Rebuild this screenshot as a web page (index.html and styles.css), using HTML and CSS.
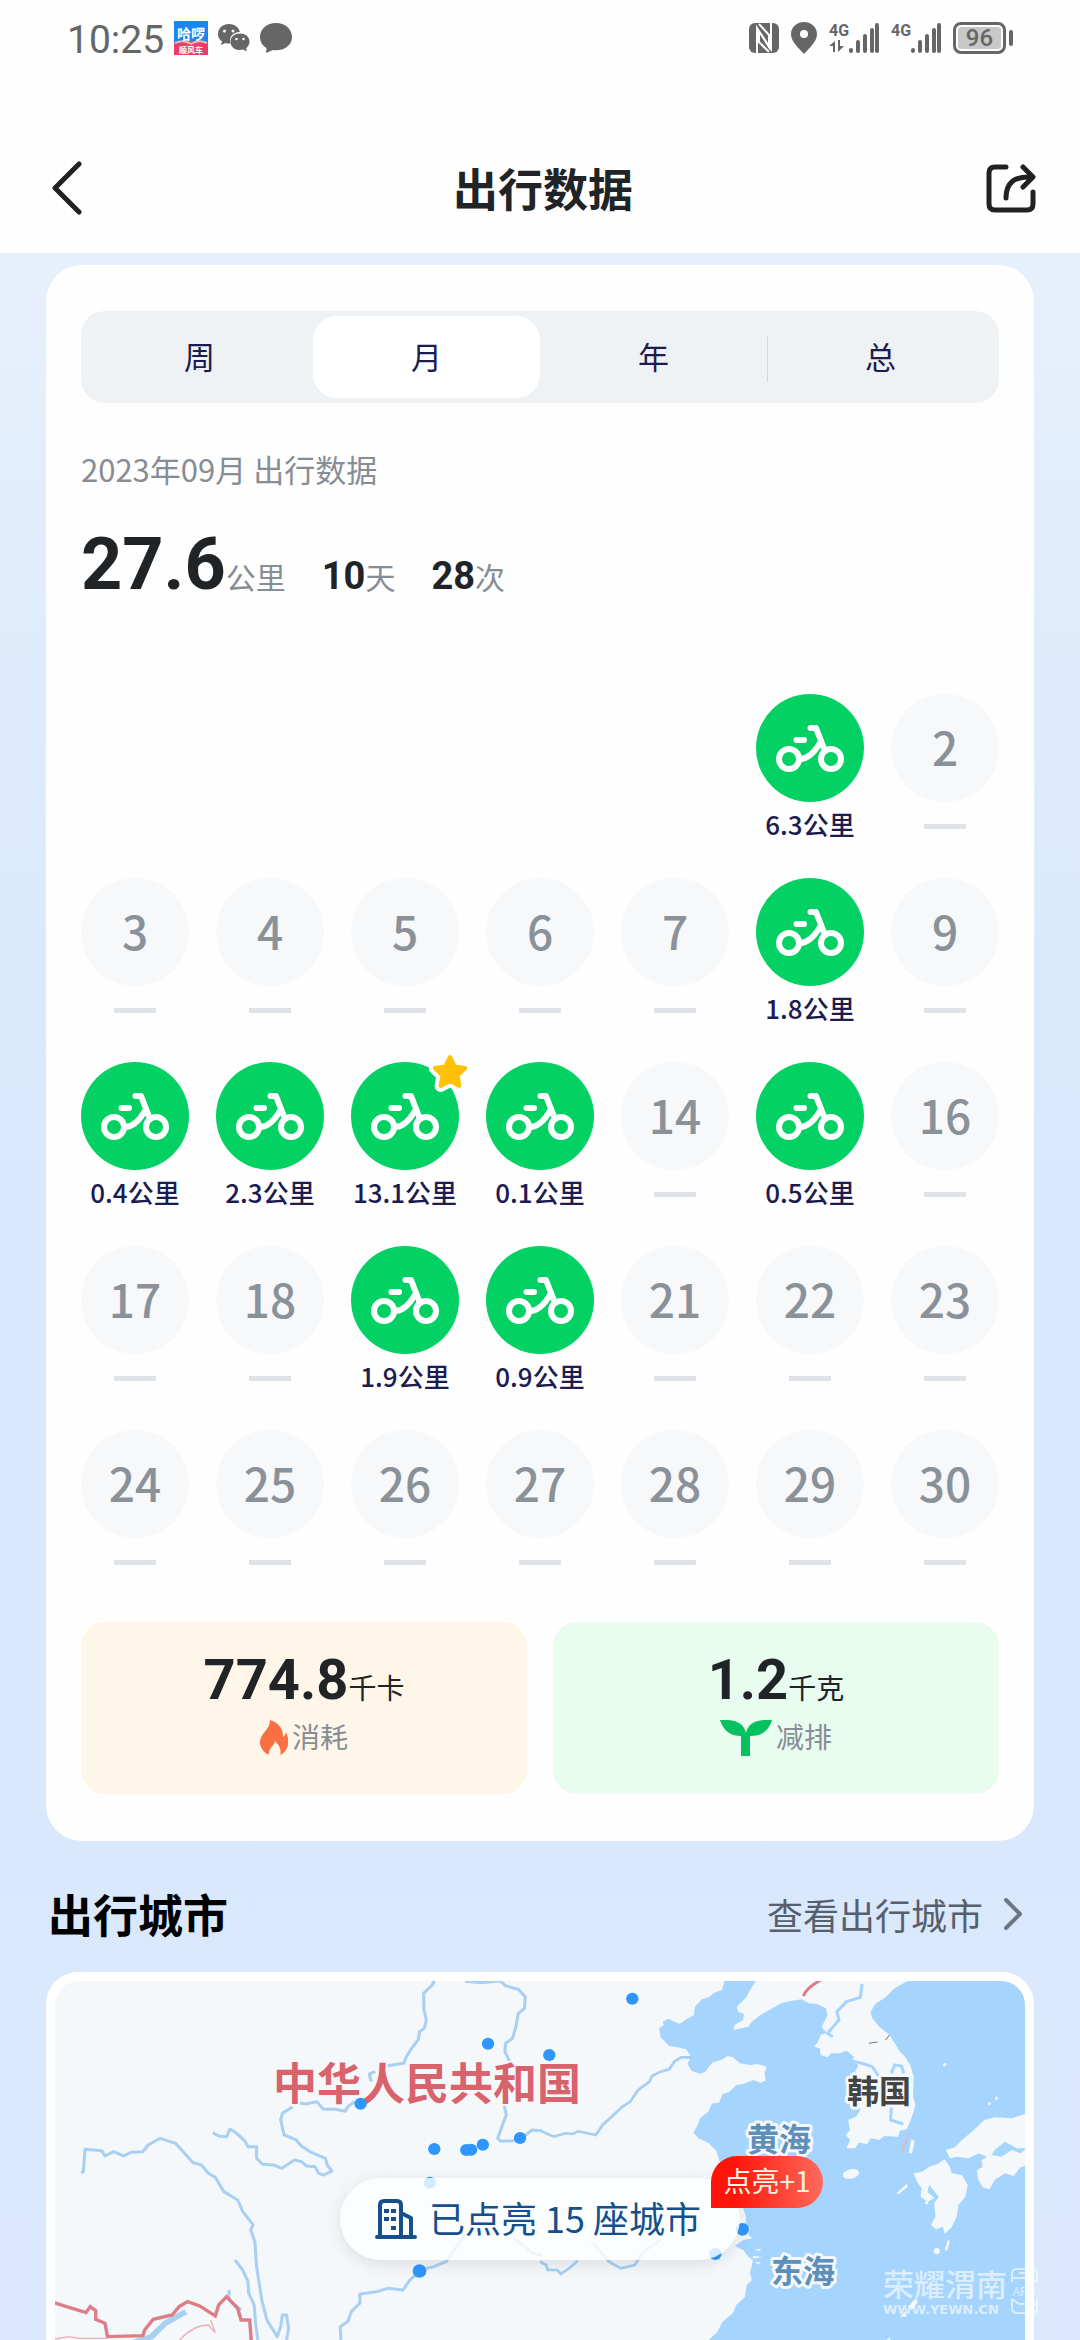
FILE: index.html
```html
<!DOCTYPE html>
<html lang="zh-CN">
<head>
    <meta charset="UTF-8">
    <meta name="viewport" content="width=device-width, initial-scale=1.0">
    <title>出行数据</title>
    <link rel="stylesheet" href="styles.css">
</head>
<body>
    <!-- shared icons -->
    <svg class="sprite" aria-hidden="true">
        <symbol id="bike" viewBox="0 0 108 108">
            <g fill="none" stroke="#fff" stroke-width="6" stroke-linecap="round" stroke-linejoin="round">
                <circle cx="33" cy="65" r="10"/>
                <circle cx="75" cy="65" r="10"/>
                <path d="M40.500 46h7.500"/>
                <path d="M54.500 34H60L69 57"/>
                <path d="M45 65Q55 64 64 49"/>
            </g>
        </symbol>
        <symbol id="signal" viewBox="0 0 30 32">
            <g stroke="#666" stroke-width="4" stroke-linecap="round">
                <path d="M2 29v-1M9 29v-9M16 29V14M23 29V8M28 29V3"/>
            </g>
        </symbol>
    </svg>

    <header class="header">
        <div class="status-bar">
            <div class="status-left">
                <span class="time">10:25</span>
                <svg width="34" height="34" viewBox="0 0 34 34">
                    <rect width="34" height="34" fill="#1d84f0"/>
                    <path d="M0 22L17 20L34 22V34H0z" fill="#ee3a6c"/>
                    <path d="M1 22Q10 18 17 23Q24 18 33 22" fill="none" stroke="#ffb3b0" stroke-width="2"/>
                    <text x="17" y="18" text-anchor="middle" font-size="14" font-weight="700" fill="#fff">哈啰</text>
                    <text x="17" y="32" text-anchor="middle" font-size="8" font-weight="700" fill="#fff">顺风车</text>
                </svg>
                <svg width="32" height="28" viewBox="0 0 32 28">
                    <path d="M11 0C5 0 0 4 0 10c0 3 1.500 5.500 4 7.500L3 21l4.500-2c1.500.5 4 .8 5 .5C10.500 13 15 8 21.800 8 21 3 16 0 11 0z" fill="#666"/>
                    <path d="M22 9.500c-5.500 0-9.500 3.500-9.500 8.200S16.500 26 22 26c1 0 2-.2 3-.5l4 2-1-3.200c2-1.600 3.500-3.700 3.500-6.600 0-4.700-4-8.200-9.500-8.200z" fill="#666"/>
                    <g fill="#fff"><circle cx="6.500" cy="7" r="1.500"/><circle cx="15" cy="7" r="1.500"/><circle cx="18.500" cy="15" r="1.300"/><circle cx="25.500" cy="15" r="1.300"/></g>
                </svg>
                <svg width="32" height="30" viewBox="0 0 32 30">
                    <path d="M16 0C7 0 0 6 0 14c0 5 2.500 8.500 6.500 11L6 30l7-3c10 1.500 19-4 19-13C32 6 25 0 16 0z" fill="#666"/>
                </svg>
            </div>
            <div class="status-right">
                <svg width="30" height="30" viewBox="0 0 30 30">
                    <rect width="30" height="30" rx="6" fill="#666"/>
                    <path d="M8 30V5l12 19V12L10 1M22 0v26L10 8v11l10 10" fill="none" stroke="#fff" stroke-width="2"/>
                </svg>
                <svg width="26" height="32" viewBox="0 0 26 32">
                    <path d="M13 0C5 0 0 6 0 12c0 8 8 14 13 20 5-6 13-12 13-20C26 6 21 0 13 0zm0 8a4 4 0 1 1 0 8 4 4 0 0 1 0-8z" fill="#666"/>
                </svg>
                <div class="network">
                    <span class="network-type">4G
                        <svg width="16" height="12" viewBox="0 0 16 12"><path d="M6 12V1L0 6h4v6zM9 0v12l6-6h-4V0z" fill="#666"/></svg>
                    </span>
                    <svg width="30" height="32"><use href="#signal"/></svg>
                </div>
                <div class="network">
                    <span class="network-type">4G</span>
                    <svg width="30" height="32"><use href="#signal"/></svg>
                </div>
                <div class="battery"><span>96</span></div>
            </div>
        </div>
        <nav class="nav">
            <button class="icon-btn" aria-label="返回">
                <svg width="32" height="54" viewBox="0 0 32 54">
                    <path d="M29 3L5 27L29 51" fill="none" stroke="#222" stroke-width="5" stroke-linecap="round" stroke-linejoin="round"/>
                </svg>
            </button>
            <h1>出行数据</h1>
            <button class="icon-btn" aria-label="分享">
                <svg width="50" height="50" viewBox="0 0 50 50">
                    <g fill="none" stroke="#222" stroke-width="5" stroke-linecap="round" stroke-linejoin="round">
                        <path d="M20 4H9Q3 4 3 10V41Q3 47 9 47H41Q47 47 47 41V29"/>
                        <path d="M20 35C20 20 28 13 46 14M37 4L47 14L37 24"/>
                    </g>
                </svg>
            </button>
        </nav>
    </header>

    <main class="content">
        <section class="card">
            <div class="tabs">
                <button class="tab">周</button>
                <button class="tab active">月</button>
                <button class="tab">年</button>
                <button class="tab divided">总</button>
            </div>

            <p class="subtitle">2023年09月 出行数据</p>
            <div class="summary">
                <span class="total"><strong>27.6</strong>公里</span>
                <span><b>10</b>天</span>
                <span><b>28</b>次</span>
            </div>

            <div class="calendar">
                <div class="day first ride"><svg class="dot"><use href="#bike"/></svg><span>6.3公里</span></div>
                <div class="day"><div class="dot">2</div><i></i></div>
                <div class="day"><div class="dot">3</div><i></i></div>
                <div class="day"><div class="dot">4</div><i></i></div>
                <div class="day"><div class="dot">5</div><i></i></div>
                <div class="day"><div class="dot">6</div><i></i></div>
                <div class="day"><div class="dot">7</div><i></i></div>
                <div class="day ride"><svg class="dot"><use href="#bike"/></svg><span>1.8公里</span></div>
                <div class="day"><div class="dot">9</div><i></i></div>
                <div class="day ride"><svg class="dot"><use href="#bike"/></svg><span>0.4公里</span></div>
                <div class="day ride"><svg class="dot"><use href="#bike"/></svg><span>2.3公里</span></div>
                <div class="day ride">
                    <svg class="dot"><use href="#bike"/></svg><span>13.1公里</span>
                    <svg class="star" viewBox="0 0 48 48">
                        <path d="M24 8L28.700 17.500L39.200 19.100L31.600 26.500L33.400 36.900L24 32L14.600 36.900L16.400 26.500L8.800 19.100L19.300 17.500z" fill="#fff" stroke="#fff" stroke-width="12" stroke-linejoin="round"/>
                        <path d="M24 8L28.700 17.500L39.200 19.100L31.600 26.500L33.400 36.900L24 32L14.600 36.900L16.400 26.500L8.800 19.100L19.300 17.500z" fill="#ffc107" stroke="#ffc107" stroke-width="4" stroke-linejoin="round"/>
                    </svg>
                </div>
                <div class="day ride"><svg class="dot"><use href="#bike"/></svg><span>0.1公里</span></div>
                <div class="day"><div class="dot">14</div><i></i></div>
                <div class="day ride"><svg class="dot"><use href="#bike"/></svg><span>0.5公里</span></div>
                <div class="day"><div class="dot">16</div><i></i></div>
                <div class="day"><div class="dot">17</div><i></i></div>
                <div class="day"><div class="dot">18</div><i></i></div>
                <div class="day ride"><svg class="dot"><use href="#bike"/></svg><span>1.9公里</span></div>
                <div class="day ride"><svg class="dot"><use href="#bike"/></svg><span>0.9公里</span></div>
                <div class="day"><div class="dot">21</div><i></i></div>
                <div class="day"><div class="dot">22</div><i></i></div>
                <div class="day"><div class="dot">23</div><i></i></div>
                <div class="day"><div class="dot">24</div><i></i></div>
                <div class="day"><div class="dot">25</div><i></i></div>
                <div class="day"><div class="dot">26</div><i></i></div>
                <div class="day"><div class="dot">27</div><i></i></div>
                <div class="day"><div class="dot">28</div><i></i></div>
                <div class="day"><div class="dot">29</div><i></i></div>
                <div class="day"><div class="dot">30</div><i></i></div>
            </div>

            <div class="stats">
                <div class="stat stat-energy">
                    <div class="stat-value"><strong>774.8</strong>千卡</div>
                    <div class="stat-label">
                        <svg width="28" height="36" viewBox="0 0 28 36">
                            <path d="M10 0C21 4 23 10 23 17Q26 15 26 12Q30 21 27 28Q25 33 20 35C22 30 19 25 15 21C15 25 8 28 9 35Q2 32 0 24C-1 13 10 11 10 0z" fill="#fa7044"/>
                        </svg>
                        <span>消耗</span>
                    </div>
                </div>
                <div class="stat stat-carbon">
                    <div class="stat-value"><strong>1.2</strong>千克</div>
                    <div class="stat-label">
                        <svg width="52" height="36" viewBox="0 0 52 36">
                            <path d="M0 0C17-1 24 4 26 13C28 4 35-1 52 0C48 12 41 16 30 16V36H21V16C11 16 4 12 0 0z" fill="#07c160"/>
                        </svg>
                        <span>减排</span>
                    </div>
                </div>
            </div>
        </section>

        <div class="section-head">
            <h2>出行城市</h2>
            <a href="#cities">查看出行城市
                <svg width="20" height="34" viewBox="0 0 20 34">
                    <path d="M3 3L17 17L3 31" fill="none" stroke="#6b7680" stroke-width="4" stroke-linecap="round" stroke-linejoin="round"/>
                </svg>
            </a>
        </div>

        <section class="map-card" id="cities">
            <svg class="map" viewBox="0 0 970 359" preserveAspectRatio="xMidYMin slice">
                <rect width="970" height="800" fill="#f5f8fa"/>
                <!-- east: sea, coast and islands -->
                <g transform="translate(485 -41) scale(.3444 .3333)">
                    <path d="M540 110L528 150L505 158L490 172L470 178L450 200L447 225L425 238L405 252L390 245L372 236L356 245L360 255L346 265L350 292L375 318L400 322L425 328L438 350L428 372L440 392L465 402L480 395L500 368L530 358L545 348L560 352L580 370L610 375L632 372L658 380L652 400L655 422L640 428L620 420L590 432L570 435L550 455L530 462L520 488L500 490L488 515L465 535L458 555L445 578L460 595L490 610L512 632L520 660L540 690L565 740L570 780L590 805L598 830L597 850L610 865L605 885L617 895L590 900L565 918L590 930L605 950L618 960L610 1000L615 1020L600 1035L595 1070L570 1095L560 1120L530 1145L515 1175L480 1210H1420V110z" fill="#a5d5fe"/>
                    <g fill="#f5f8fa">
                        <path d="M635 110L610 150L600 170L572 200L575 215L592 222L590 240L565 255L562 270L585 265L605 260L615 245L640 225L670 208L700 190L730 182L760 178L780 190L805 192L830 205L835 225L818 260L832 278L815 285L805 310L795 320L812 325L815 345L835 352L845 340L870 340L890 332L912 350L905 365L925 375L915 395L935 420L925 460L930 510L918 530L895 540L900 570L888 585L900 600L890 625L915 625L925 608L950 612L960 595L985 600L1000 588L1040 590L1045 572L1065 568L1080 530L1090 495L1083 470L1085 410L1075 375L1060 350L1045 335L1030 310L1015 285L985 260L965 235L960 215L975 190L1000 175L1030 145L1075 118V110z"/>
                        <ellipse cx="903" cy="702" rx="24" ry="14" transform="rotate(-12 903 702)"/>
                        <path d="M1085 700L1110 695L1130 680L1155 672L1175 658L1190 680L1195 700L1225 705L1242 735L1235 770L1215 795L1210 830L1195 862L1175 882L1170 860L1150 868L1135 855L1148 830L1145 790L1158 770L1130 735L1125 755L1145 775L1125 785L1105 770L1108 745L1095 725z"/>
                        <path d="M1178 630L1205 622L1225 600L1260 570L1290 540L1320 532L1370 535L1420 518V625L1385 625L1350 605L1320 630L1305 655L1275 640L1245 655L1210 650L1190 655z"/>
                        <path d="M1268 692L1285 680L1282 660L1310 645L1340 650L1370 630L1395 640L1420 620V675L1395 682L1375 708L1350 700L1320 720L1305 748L1285 742L1272 718z"/>
                        <path d="M1035 760L1065 732L1068 740L1042 762zM1070 640L1078 598L1088 604L1080 640zM1175 930L1185 898L1190 905L1182 932zM1320 480L1325 468L1332 478z"/>
                        <circle cx="1152" cy="933" r="9"/><circle cx="1175" cy="374" r="5"/><circle cx="1123" cy="788" r="5"/><circle cx="1305" cy="491" r="4"/>
                        <path d="M1070 1100L1090 1075L1098 1085L1080 1110zM1045 1130L1060 1115L1065 1130zM1005 1200L1018 1190L1015 1205zM620 930L640 926V933zM618 948L645 950L620 956zM625 968L640 965L635 974z"/>
                    </g>
                    <g fill="none" stroke="#a5d5fe" stroke-width="9">
                        <path d="M935 132L930 172L890 185L862 215L868 240L835 280L850 290M890 360L935 370L965 380L985 412M1020 400L1030 375L1050 378L1056 400M1020 500L1018 540L1055 552"/>
                    </g>
                    <path d="M0 572L40 590L75 580L95 582L110 574L162 585L182 555L240 500L262 485L285 450L318 425L325 408L350 395L375 388L390 365L410 352H440M0 965L18 975L22 990H50L60 1002L85 985L110 962M150 905L200 965L235 985L275 975L300 935L350 900" fill="none" stroke="#a5cff5" stroke-width="8"/>
                    <path d="M765 168Q772 145 815 120" fill="none" stroke="#dc7d87" stroke-width="9"/>
                    <path d="M955 310L980 306M1003 300L1015 285" stroke="#777" stroke-width="3"/>
                    <path d="M1050 640L1070 580" stroke="#c9bfdc" stroke-width="7"/>
                    <g fill="#2e96fc">
                        <circle cx="268" cy="176" r="18"/><circle cx="27" cy="345" r="18"/><circle cx="588" cy="868" r="19"/><circle cx="509" cy="942" r="18"/>
                    </g>
                </g>
                <!-- west: rivers and borders -->
                <g transform="translate(-55 -41) scale(.3444 .3333)">
                    <g fill="none" stroke="#a9d0f3" stroke-width="9" stroke-linejoin="round">
                        <path d="M1262 120L1255 135L1230 160L1231 210L1238 240L1232 265L1218 275L1215 298L1195 325L1180 350L1172 370L1120 378M1090 395L1072 402L1078 425M1030 485L1010 500L1002 514L975 508L938 507L920 485L888 492L865 488M850 500L820 520L815 540L825 585L860 600L875 618L905 638L945 655L950 675L964 693L940 705L925 700L915 680L890 678L875 665L855 660L818 685L795 675L762 673L745 655V620H720L710 602L685 578L668 567L658 590L635 588L618 578"/>
                        <path d="M235 698L242 696L247 628L295 632L305 648L330 635L358 648L380 637L415 635L430 615L465 595L510 610L560 668L585 675L605 700L625 712L650 755L690 780L705 815L735 855L728 870L740 905L745 980L760 1080L775 1140L805 1190L815 1160L820 1125H832L838 1165L830 1210"/>
                        <path d="M682 960L705 990L720 1025L722 1060L738 1095L742 1150L750 1210M665 1050V1080L700 1110"/>
                        <path d="M1350 124L1400 128L1450 122L1470 138L1505 148L1525 170L1523 205L1505 220L1498 260L1488 295L1468 310L1466 335L1480 365M1463 490L1470 525L1445 595L1455 604L1490 602L1520 590L1545 570L1575 572M990 1205L988 1160L1010 1145L1020 1115L1045 1090V1062L1095 1055L1125 1045L1170 1050L1190 1020L1220 995L1240 985L1260 980L1295 965L1350 885M1490 895L1525 920L1545 940L1575 945"/>
                        <path d="M385 1208L440 1190L480 1150L540 1115" stroke-width="17"/>
                    </g>
                    <path d="M155 1088L200 1102L250 1118L262 1100L278 1112V1138L305 1150L312 1190L415 1187L420 1170L445 1138L500 1125L520 1100L545 1085L580 1098L625 1128L635 1095L658 1070L690 1105L700 1140L725 1140L730 1210" fill="none" stroke="#dc7d87" stroke-width="10"/>
                    <path d="M155 1198L200 1190L230 1195H310M520 1202Q560 1155 605 1155L625 1178L612 1140" fill="none" stroke="#e8b0b6" stroke-width="4"/>
                </g>
                <text class="label-country" x="372" y="119" text-anchor="middle">中华人民共和国</text>
                <g transform="translate(-55 -41) scale(.3444 .3333)" fill="#2e96fc">
                    <circle cx="1417" cy="311" r="18"/><circle cx="1047" cy="491" r="18"/><circle cx="1510" cy="594" r="18"/><circle cx="1402" cy="614" r="18"/><circle cx="1261" cy="627" r="18"/><circle cx="1354" cy="630" r="18"/><circle cx="1368" cy="629" r="18"/><circle cx="1248" cy="728" r="18"/><circle cx="1218" cy="993" r="20"/>
                </g>
                <g class="label-place">
                    <text x="792" y="122" fill="#444">韩国</text>
                    <text x="692" y="170" fill="#5c8fba">黄海</text>
                    <text x="716" y="302" fill="#5c8fba">东海</text>
                </g>
            </svg>

            <div class="lit-pill">
                <svg width="42" height="40" viewBox="0 0 42 40">
                    <g fill="none" stroke="#15508c" stroke-width="4" stroke-linecap="round" stroke-linejoin="round">
                        <path d="M2 38H40M5 38V6Q5 2 9 2H22Q26 2 26 6V38M26 14L36 19V38"/>
                    </g>
                    <path d="M9 10h5v4h-5zM16 10h5v4h-5zM9 18h5v4h-5zM16 18h5v4h-5zM16 27h5v4h-5z" fill="#15508c"/>
                </svg>
                <span>已点亮 15 座城市</span>
                <em>点亮+1</em>
            </div>

            <div class="watermark">
                <div>
                    <p>荣耀渭南</p>
                    <small>WWW.YEWN.CN</small>
                </div>
                <svg width="27" height="46" viewBox="0 0 27 46">
                    <g fill="none" stroke="#fff" stroke-width="2">
                        <path d="M1 14V6Q1 1 6 1H21Q26 1 26 6V14M1 31V40Q1 45 6 45H21Q26 45 26 40V31M1 10H20L26 14M1 31L8 36H26M8 5H18"/>
                    </g>
                    <text x="13" y="28" text-anchor="middle" font-size="12" fill="#fff">APP</text>
                </svg>
            </div>
        </section>
    </main>
</body>
</html>
```
FILE: styles.css
```css
* {
    box-sizing: border-box;
    margin: 0;
    padding: 0;
}
body {
    font-family: 'Noto Sans CJK SC', sans-serif;
    background: linear-gradient(#e8f0fb 250px, #ddebfc 700px, #d9e8fc 1200px, #dbe8fd);
    height: 100vh;
    min-height: 2200px;
    display: flex;
    flex-direction: column;
    overflow: hidden;
    color: #202426;
}
button {
    border: none;
    background: none;
    font: inherit;
    color: inherit;
    cursor: pointer;
}
svg {
    display: block;
    flex-shrink: 0;
}
.sprite {
    position: absolute;
    width: 0;
    height: 0;
}

/* header */
.header {
    background: #fefefe;
}
.status-bar {
    height: 76px;
    padding: 0 67px;
    display: flex;
    align-items: center;
    justify-content: space-between;
    color: #666;
}
.status-left,
.status-right {
    display: flex;
    align-items: center;
    gap: 10px;
}
.status-right {
    gap: 12px;
}
.time {
    padding-top: 4px;
    font-family: Roboto, sans-serif;
    font-size: 39px;
    line-height: 48px;
}
.network {
    display: flex;
}
.network-type {
    width: 20px;
    font-family: Roboto, sans-serif;
    font-size: 16px;
    font-weight: 700;
    line-height: 18px;
}
.battery {
    position: relative;
    width: 53px;
    height: 32px;
    margin-right: 7px;
    padding: 2px;
    border: 3px solid #666;
    border-radius: 8px;
}
.battery span {
    display: block;
    background: #c8c8c8;
    border-radius: 3px;
    font-family: Roboto, sans-serif;
    font-size: 24px;
    font-weight: 500;
    line-height: 22px;
    text-align: center;
}
.battery::after {
    content: '';
    position: absolute;
    right: -10px;
    top: 5px;
    width: 4px;
    height: 16px;
    border-radius: 2px;
    background: #666;
}
.nav {
    height: 126px;
    margin-top: 51px;
    padding: 0 44px 4px 50px;
    display: flex;
    align-items: center;
    justify-content: space-between;
}
.icon-btn {
    display: flex;
    width: 50px;
}
h1 {
    font-size: 45px;
    font-weight: 700;
    line-height: 60px;
}

/* trip card */
.content {
    flex: 1;
    display: flex;
    flex-direction: column;
    padding: 12px 46px 0;
    min-height: 0;
}
.card {
    background: #fefefe;
    border-radius: 36px;
    padding: 46px 35px 47px;
}
.tabs {
    display: grid;
    grid-template-columns: repeat(4, 1fr);
    height: 92px;
    padding: 5px;
    background: #eff2f5;
    border-radius: 24px;
}
.tab {
    position: relative;
    padding-bottom: 4px;
    border-radius: 24px;
    font-size: 31px;
    color: #1c1c4f;
}
.tab.active {
    background: #fff;
}
.tab.divided::before {
    content: '';
    position: absolute;
    left: 0;
    top: 20px;
    bottom: 16px;
    width: 1px;
    background: #d5d9de;
}
.subtitle {
    margin-top: 46px;
    font-size: 31px;
    line-height: 40px;
    color: #868d95;
}
.summary {
    display: flex;
    align-items: baseline;
    gap: 36px;
    height: 112px;
    margin-top: 20px;
    margin-bottom: 73px;
    font-size: 30px;
    line-height: 112px;
    color: #868d95;
}
.summary strong,
.summary b,
.stat strong {
    font-family: Roboto, sans-serif;
    color: #202426;
}
.summary strong {
    font-size: 72px;
}
.summary b {
    font-size: 38px;
}

/* calendar */
.calendar {
    display: grid;
    grid-template-columns: repeat(7, 108px);
    justify-content: space-between;
    row-gap: 37px;
}
.day {
    position: relative;
    display: flex;
    flex-direction: column;
    align-items: center;
    height: 147px;
}
.day.first {
    grid-column-start: 6;
}
.dot {
    width: 108px;
    height: 108px;
    border-radius: 50%;
    background: #f6f8fa;
    color: #8a9199;
    font-size: 46px;
    font-weight: 500;
    line-height: 104px;
    text-align: center;
}
.ride .dot {
    background: #04d163;
}
.day span {
    margin-top: 7px;
    font-size: 26px;
    font-weight: 500;
    line-height: 30px;
    color: #1c1c4f;
    white-space: nowrap;
}
.day i {
    width: 42px;
    height: 5px;
    margin-top: 22px;
    background: #dfe2e6;
}
.star {
    position: absolute;
    top: -13px;
    right: -15px;
    width: 48px;
    height: 48px;
}

/* stats */
.stats {
    display: grid;
    grid-template-columns: 1fr 1fr;
    gap: 26px;
    margin-top: 45px;
}
.stat {
    height: 172px;
    padding-top: 20px;
    border-radius: 24px;
    text-align: center;
}
.stat-energy {
    background: #fff6ea;
}
.stat-carbon {
    background: #e8fcf0;
}
.stat-value {
    height: 72px;
    font-size: 28px;
    line-height: 76px;
}
.stat strong {
    font-size: 56px;
}
.stat-label {
    display: flex;
    align-items: center;
    justify-content: center;
    gap: 4px;
    margin-top: 4px;
    font-size: 28px;
    line-height: 36px;
    color: #868d95;
}
.stat-label span {
    padding-bottom: 4px;
}

/* cities */
.section-head {
    display: flex;
    align-items: center;
    justify-content: space-between;
    height: 131px;
    padding: 14px 11px 0 2px;
}
h2 {
    font-size: 45px;
    font-weight: 700;
    line-height: 60px;
    color: #000;
}
.section-head a {
    display: flex;
    align-items: center;
    gap: 20px;
    font-size: 36px;
    line-height: 48px;
    color: #56606c;
    text-decoration: none;
}
.map-card {
    position: relative;
    flex: 1;
    min-height: 0;
    padding: 9px 9px 0;
    background: #fff;
    border-radius: 32px 32px 0 0;
}
.map {
    width: 100%;
    height: 100%;
    border-radius: 24px 24px 0 0;
}
.label-country {
    font-size: 44px;
    font-weight: 700;
    fill: #d9636d;
    paint-order: stroke;
    stroke: #f5f8fa;
    stroke-width: 4px;
}
.label-place {
    font-size: 32px;
    font-weight: 700;
    paint-order: stroke;
    stroke: #f5f8fa;
    stroke-width: 6px;
    stroke-linejoin: round;
}
.lit-pill {
    position: absolute;
    top: 206px;
    left: 50%;
    transform: translateX(-50%);
    display: flex;
    align-items: center;
    gap: 12px;
    width: 400px;
    height: 82px;
    padding-left: 35px;
    border-radius: 41px;
    background: rgba(253, 254, 255, 0.82);
    box-shadow: 0 4px 16px rgba(60, 80, 110, 0.15);
    font-size: 36px;
    color: #15508c;
    white-space: nowrap;
}
.lit-pill span {
    padding-bottom: 4px;
}
.lit-pill em {
    position: absolute;
    top: -22px;
    right: -83px;
    width: 112px;
    height: 52px;
    border-radius: 26px 26px 26px 0;
    background: linear-gradient(90deg, #ff1409 20%, #ff6b5c);
    font-size: 28px;
    font-style: normal;
    line-height: 48px;
    text-align: center;
    color: #fff3e0;
}
.watermark {
    position: absolute;
    top: 292px;
    right: -4px;
    display: flex;
    align-items: center;
    gap: 4px;
    color: #fff;
    opacity: 0.6;
}
.watermark p {
    font-size: 31px;
    font-weight: 500;
    line-height: 38px;
}
.watermark small {
    display: block;
    font-family: 'DejaVu Sans', sans-serif;
    font-size: 13px;
    font-weight: 700;
    line-height: 16px;
}
```
